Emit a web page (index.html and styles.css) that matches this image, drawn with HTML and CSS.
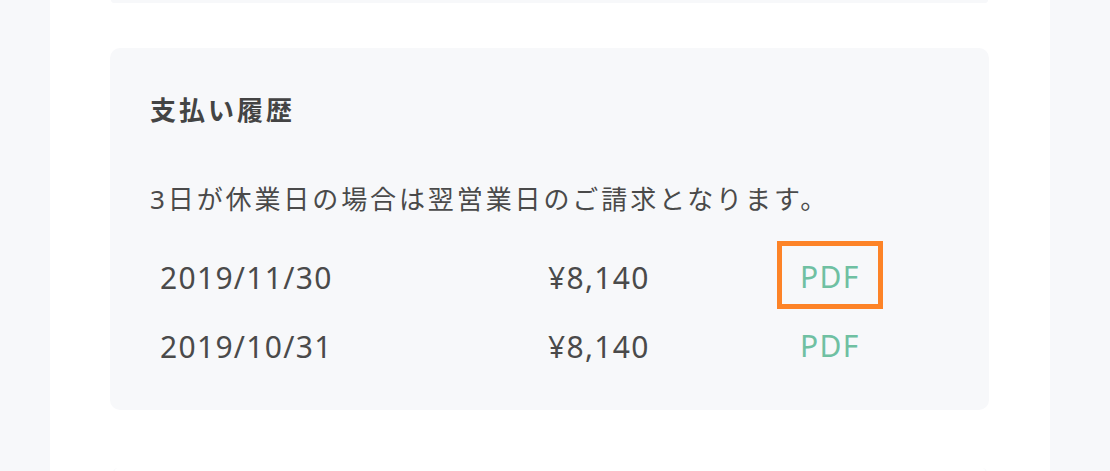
FILE: index.html
```html
<!DOCTYPE html>
<html lang="ja">
<head>
  <meta charset="UTF-8" />
  <meta name="viewport" content="width=device-width, initial-scale=1.0" />
  <title>支払い履歴</title>
  <link rel="stylesheet" href="styles.css">
</head>
<body>
  <div class="page">
    <!-- 上のカード（末尾だけ見えている） -->
    <div class="card card-prev"></div>

    <!-- 支払い履歴 -->
    <section class="card history">
      <h2 class="history-title">支払い履歴</h2>
      <p class="history-note">3日が休業日の場合は翌営業日のご請求となります。</p>
      <div class="history-list">
        <div class="history-row">
          <span class="history-date">2019/11/30</span>
          <span class="history-amount">¥8,140</span>
          <a href="#" class="history-pdf selected">PDF</a>
        </div>
        <div class="history-row">
          <span class="history-date">2019/10/31</span>
          <span class="history-amount">¥8,140</span>
          <a href="#" class="history-pdf">PDF</a>
        </div>
      </div>
    </section>

    <!-- 次のカード（上端だけ見えている） -->
    <div class="card card-next"></div>
  </div>
</body>
</html>
```

FILE: styles.css
```css
html,
body {
  margin: 0;
  height: 100%;
  overflow: hidden;
}
body {
  background: #f7f8fa;
  font-family: "Noto Sans", "Noto Sans CJK JP", sans-serif;
  color: #4a4a4a;
}

.page {
  width: 1000px;
  height: 100%;
  margin-left: 50px;
  padding: 0 61px 0 60px;
  box-sizing: border-box;
  background: #fff;
  overflow: hidden;
}

/* カード共通 */
.card {
  background: #f7f8fa;
  border-radius: 10px;
}
.card-prev {
  height: 3px;
  margin: 0 1px;
  border-radius: 0 0 3px 3px;
}
.card-next {
  height: 10px;
  margin: 58px 2px 0 3px;
  background: #fff;
  border: 1px solid #f5f6f8;
  border-top: 0;
  border-bottom: 0;
}

.history {
  margin-top: 45px;
  padding: 44px 40px 30px;
  height: 362px;
  box-sizing: border-box;
}

.history-title {
  margin: 0;
  font-size: 26px;
  line-height: 36px;
  font-weight: bold;
  letter-spacing: 3px;
  color: #444;
}

.history-note {
  margin: 53px 0 0;
  font-size: 26px;
  line-height: 36px;
  letter-spacing: 2.9px;
}

/* 明細 */
.history-list {
  margin-top: 23px;
  padding-left: 10px;
}
.history-row {
  display: grid;
  grid-template-columns: 388px 229px 106px;
  height: 69px;
  align-items: center;
  font-size: 30px;
  letter-spacing: 1.3px;
}
.history-date,
.history-amount {
  padding-top: 6px;
}
.history-pdf {
  display: flex;
  align-items: center;
  height: 68px;
  padding-left: 18px;
  padding-top: 4px;
  box-sizing: border-box;
  border: 5px solid transparent;
  color: #6fc0a2;
  text-decoration: none;
}
.history-pdf.selected {
  border-color: #fd8327;
}
```
